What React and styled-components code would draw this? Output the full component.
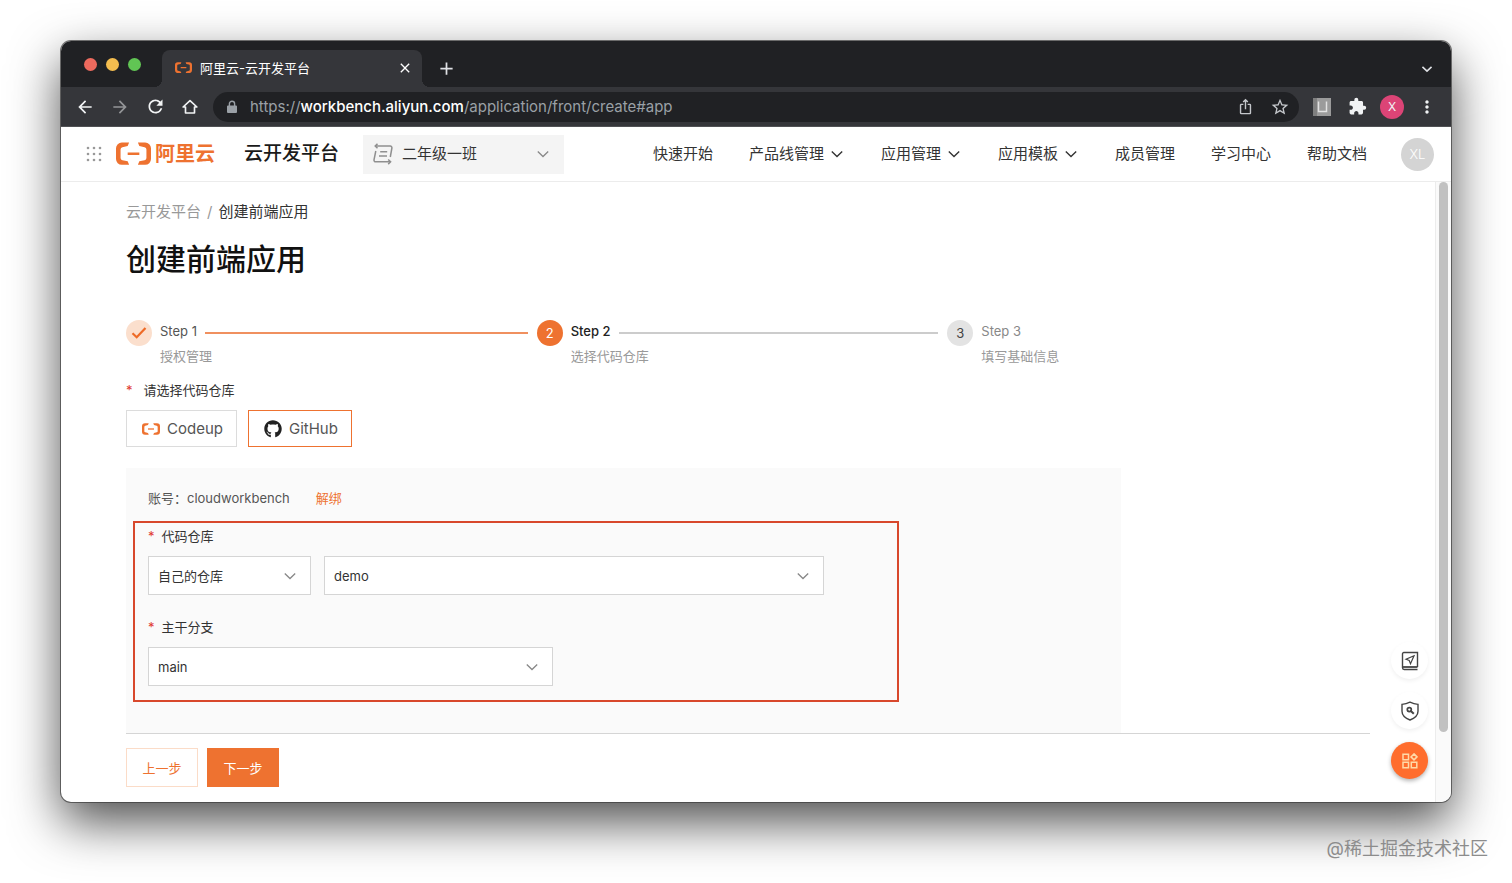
import React from 'react';
import styled, { createGlobalStyle } from 'styled-components';
import {
	MdArrowBack,
	MdArrowForward,
	MdRefresh,
	MdIosShare,
	MdStarBorder,
	MdExtension,
	MdMoreVert,
	MdClose,
	MdAdd,
} from 'react-icons/md';
import { FaGithub } from 'react-icons/fa';

const GlobalStyle = createGlobalStyle`
	:root {
		--orange: #ee7230;
		--red: #d8482c;
		--text: #333;
		--muted: #999;
	}

	* {
		box-sizing: border-box;
	}

	body {
		margin: 0;
		background: #fff;
		color: var(--text);
		font-family: Inter, 'Noto Sans CJK SC', sans-serif;
		font-size: 13px;
		line-height: 20px;
	}

	button,
	select {
		font: inherit;
		color: inherit;
		margin: 0;
		padding: 0;
		border: 0;
		background: none;
	}

	a {
		color: inherit;
		text-decoration: none;
	}

	svg {
		display: block;
		flex: none;
	}
`;

/* ---------- icons ---------- */

const AliyunMark = ({ width, color = '#ee7230' }) => (
	<svg width={width} viewBox='0 0 36 24' fill={color}>
		<path d='M13.500 .5H6A6 6 0 0 0 0 6.500v11a6 6 0 0 0 6 6h7.500l-1.500-3.600-5.400-1.200A2.400 2.400 0 0 1 4.700 16.400V7.600a2.400 2.400 0 0 1 1.900-2.300L12 4.100z' />
		<path d='M22.500 .5H30a6 6 0 0 1 6 6v11a6 6 0 0 1-6 6h-7.500l1.500-3.600 5.400-1.200a2.400 2.400 0 0 0 1.900-2.300V7.600a2.400 2.400 0 0 0-1.900-2.300L24 4.100z' />
		<path d='M12 10.700h12v2.600H12z' />
	</svg>
);

const Chevron = ({ size = 16, color = '#333', strokeWidth = 1.4 }) => (
	<svg
		width={size}
		height={size}
		viewBox='0 0 16 16'
		fill='none'
		stroke={color}
		strokeWidth={strokeWidth}
	>
		<path d='m2.800 5.500 5.200 5 5.200-5' />
	</svg>
);

const HomeIcon = () => (
	<svg width='18' height='18' viewBox='0 0 24 24' fill='none' stroke='currentColor' strokeWidth='2.2'>
		<path d='M12 3.500 2.800 12H6v8h12v-8h3.200z' strokeLinejoin='round' />
	</svg>
);

const LockIcon = () => (
	<svg width='14' height='14' viewBox='0 0 14 14'>
		<path fill='#9aa0a6' d='M3 5.500h8a1 1 0 0 1 1 1V12a1 1 0 0 1-1 1H3a1 1 0 0 1-1-1V6.500a1 1 0 0 1 1-1z' />
		<path fill='none' stroke='#9aa0a6' strokeWidth='1.400' d='M4.400 6V3.800a2.600 2.600 0 0 1 5.200 0V6' />
	</svg>
);

const GridDots = () => (
	<svg width='16' height='16' viewBox='0 0 16 16' fill='#999'>
		{[2, 8, 14].map((y) =>
			[2, 8, 14].map((x) => <circle key={`${x}-${y}`} cx={x} cy={y} r='1.300' />)
		)}
	</svg>
);

const TeamIcon = () => (
	<svg width='22' height='22' viewBox='0 0 22 22' fill='none' stroke='#8f8f8f' strokeWidth='1.500'>
		<path d='M5.500 .8 3.200 3.100l2.300 2.200' />
		<path d='M3.500 3.100h14.800a1.600 1.600 0 0 1 1.600 1.900L18.300 14' />
		<path d='M3.800 8 2 16.900a1.600 1.600 0 0 0 1.600 1.900h14.800' />
		<path d='m16.200 16.500 2.400 2.300-2.400 2.300' />
		<path d='M8.200 8.800h7M7 13h8' />
	</svg>
);

const GuideIcon = () => (
	<svg width='18' height='20' viewBox='0 0 18 20' fill='none' stroke='#444' strokeWidth='1.400'>
		<path d='M16.500 16V1.500H2.800A1.300 1.300 0 0 0 1.500 2.800v14a1.700 1.700 0 0 0 1.700 1.700h13.300' />
		<path d='M1.500 16H16.500' strokeWidth='1.800' />
		<path d='m13 4.800-8 3.400 3.200 1.300 1.300 3.200z' strokeWidth='1.200' />
	</svg>
);

const ShieldIcon = () => (
	<svg width='18' height='20' viewBox='0 0 18 20' fill='none' stroke='#444' strokeWidth='1.400'>
		<path d='M9 1.200c2.600 1.300 5.200 2 8 2.200v6.800c0 3.800-3.200 6.900-8 8.800-4.800-1.900-8-5-8-8.800V3.400c2.800-.2 5.400-.9 8-2.200z' />
		<circle cx='8.300' cy='8.600' r='2' strokeWidth='1.700' />
		<path d='m9.800 10 3 2.800' strokeWidth='2' />
	</svg>
);

const BlocksIcon = () => (
	<svg width='16' height='16' viewBox='0 0 16 16' fill='none' stroke='#ffd9a8' strokeWidth='1.500'>
		<path d='M1 1.200h5.500v5.500H1zM1 9.200h5.500v5.500H1zM9.300 9.200h5.500v5.500H9.300zM12 .9l3 3-3 3-3-3z' />
	</svg>
);

const CheckIcon = () => (
	<svg width='16' height='16' viewBox='0 0 16 16' fill='none' stroke='#ee6a26' strokeWidth='2.200'>
		<path d='m1.500 8.200 4.200 4L14.500 3' />
	</svg>
);

const UnitIcon = () => (
	<svg width='18' height='18' viewBox='0 0 18 18'>
		<path fill='#9b9b9b' d='M0 0h18v18H0z' />
		<path fill='#7f7f7f' d='M0 0h4v18H0z' />
		<path fill='none' stroke='#e2e2e2' strokeWidth='1.500' d='M5.500 3.500v10h8v-10' />
	</svg>
);

/* ---------- browser window ---------- */

const Desktop = styled.div`
	min-height: 100vh;
	padding-top: 41px;
	overflow: hidden;
`;

const Window = styled.div`
	margin: 0 61px;
	border-radius: 10px;
	overflow: hidden;
	background: #fff;
	box-shadow: 0 0 0 1px rgba(60, 60, 60, 0.7), 0 20px 50px rgba(0, 0, 0, 0.7);
`;

const TabStrip = styled.div`
	display: flex;
	align-items: flex-end;
	height: 46px;
	padding: 0 10px 0 23px;
	background: #202124;
	color: #dfe1e5;
`;

const Lights = styled.div`
	display: flex;
	align-items: center;
	gap: 9px;
	height: 46px;
	margin-right: 21px;
`;

const Light = styled.button`
	width: 13px;
	height: 13px;
	border-radius: 50%;
	background: ${({ $color }) => $color};
`;

const Tab = styled.div`
	position: relative;
	display: flex;
	align-items: center;
	width: 260px;
	height: 37px;
	padding: 0 9px 2px 13px;
	gap: 8px;
	border-radius: 8px 8px 0 0;
	background: #35363a;
	color: #fff;

	&::before,
	&::after {
		content: '';
		position: absolute;
		bottom: 0;
		width: 8px;
		height: 8px;
	}

	&::before {
		right: 100%;
		background: radial-gradient(circle at 0 0, transparent 8px, #35363a 8px);
	}

	&::after {
		left: 100%;
		background: radial-gradient(circle at 100% 0, transparent 8px, #35363a 8px);
	}
`;

const TabTitle = styled.span`
	flex: 1;
`;

const StripButton = styled.button`
	display: grid;
	place-items: center;
	height: 37px;
	width: ${({ $width }) => $width}px;
`;

const Spacer = styled.div`
	flex: 1;
`;

const Toolbar = styled.div`
	display: flex;
	align-items: center;
	gap: 7px;
	height: 40px;
	padding: 0 10px;
	border-bottom: 1px solid #505154;
	background: #35363a;
	color: #f1f3f4;
`;

const ToolButton = styled.button`
	display: grid;
	place-items: center;
	width: 28px;
	height: 28px;
	opacity: ${({ disabled }) => (disabled ? 0.5 : 1)};
`;

const AddressBar = styled.div`
	flex: 1;
	display: flex;
	align-items: center;
	height: 30px;
	margin: 0 2px;
	padding: 0 5px 0 12px;
	border-radius: 15px;
	background: #202124;
	color: #9aa0a6;
	gap: 7px;
`;

const Address = styled.span`
	flex: 1;
	padding-left: 4px;
	font-family: Inter, sans-serif;
	font-size: 15px;

	b {
		font-weight: 500;
		color: #fff;
	}
`;

const Profile = styled.span`
	display: grid;
	place-items: center;
	width: 24px;
	height: 24px;
	border-radius: 50%;
	background: #dc4476;
	font-size: 12px;
`;

/* ---------- site header ---------- */

const Header = styled.header`
	display: flex;
	align-items: center;
	height: 55px;
	padding: 0 17px 0 25px;
	border-bottom: 1px solid #ececec;
	font-size: 15px;
`;

const Brand = styled.a`
	display: flex;
	align-items: center;
	gap: 4px;
	margin-left: 14px;
	color: var(--orange);
	font-size: 20px;
	font-weight: 600;
`;

const Product = styled.strong`
	margin: 0 24px 0 29px;
	font-size: 19px;
	font-weight: 500;
	color: #1a1a1a;
`;

const SelectBox = styled.div`
	display: grid;
	grid-template-columns: 1fr 40px;
	align-items: center;
	width: ${({ $width }) => $width}px;
	height: 39px;
	border: 1px solid ${({ $plain }) => ($plain ? '#f4f4f4' : '#d5d5d5')};
	background: ${({ $plain }) => ($plain ? '#f4f4f4' : '#fff')};

	select {
		grid-area: 1 / 1 / 2 / 3;
		width: 100%;
		height: 37px;
		padding-left: ${({ $plain }) => ($plain ? 38 : 9)}px;
		appearance: none;
		outline: none;
	}

	svg {
		pointer-events: none;
	}
`;

const SelectLead = styled.span`
	grid-area: 1 / 1;
	padding-left: 8px;
`;

const SelectArrow = styled.span`
	grid-area: 1 / 2;
	justify-self: center;
`;

const Nav = styled.nav`
	display: flex;
	align-items: center;
	gap: 36px;
	margin-left: auto;
	margin-right: 34px;

	a {
		display: flex;
		align-items: center;
		gap: 5px;
		white-space: nowrap;
	}
`;

const Avatar = styled.span`
	display: grid;
	place-items: center;
	width: 33px;
	height: 33px;
	border-radius: 50%;
	background: #d4d4d4;
	color: #fff;
	font-size: 13px;
	font-weight: 300;
`;

/* ---------- page ---------- */

const Viewport = styled.div`
	position: relative;
	display: flex;
`;

const Main = styled.main`
	flex: 1;
	padding: 20px 65px 15px;
`;

const Scrollbar = styled.div`
	width: 16px;
	padding-left: 3px;
	border-left: 1px solid #ececec;
	background: #fafafa;

	&::before {
		content: '';
		display: block;
		width: 9px;
		height: 550px;
		border-radius: 5px;
		background: #c1c1c1;
	}
`;

const Breadcrumb = styled.nav`
	display: flex;
	gap: 6px;
	font-size: 15px;
	color: var(--muted);

	[aria-current] {
		color: var(--text);
	}
`;

const Title = styled.h1`
	margin: 17px 0 41px;
	font-size: 30px;
	line-height: 40px;
	font-weight: 500;
	color: #111;
`;

const Steps = styled.ol`
	display: grid;
	grid-template-columns: repeat(3, 1fr);
	margin: 0;
	padding: 0 12px 0 0;
	list-style: none;
`;

const StepItem = styled.li`
	display: flex;
	gap: 8px;
`;

const stepColors = {
	done: { badge: '#fbdfcd', mark: '#ee6a26', title: '#555', line: '#f0905f' },
	current: { badge: '#ee7230', mark: '#fff', title: '#222', line: '#ccc' },
	todo: { badge: '#e3e3e3', mark: '#444', title: '#888', line: 'transparent' },
};

const StepBadge = styled.span`
	display: grid;
	place-items: center;
	width: 26px;
	height: 26px;
	border-radius: 50%;
	background: ${({ $state }) => stepColors[$state].badge};
	color: ${({ $state }) => stepColors[$state].mark};
`;

const StepBody = styled.div`
	flex: 1;
	color: var(--muted);
`;

const StepHead = styled.div`
	display: flex;
	align-items: center;
	gap: 8px;
	height: 26px;
	padding-right: 9px;

	span {
		padding-bottom: 4px;
		font-weight: ${({ $state }) => ($state === 'current' ? 500 : 400)};
		color: ${({ $state }) => stepColors[$state].title};
	}

	&::after {
		content: '';
		flex: 1;
		height: 2px;
		background: ${({ $state }) => stepColors[$state].line};
	}
`;

const FieldLabel = styled.label`
	display: flex;
	gap: ${({ $wide }) => ($wide ? 11 : 7)}px;

	&::before {
		content: '*';
		color: #e0392f;
	}
`;

const Providers = styled.div`
	display: flex;
	gap: 11px;
	margin: 10px 0 21px;
`;

const ProviderField = styled.div`
	margin-top: 14px;
`;

const ProviderButton = styled.button`
	display: flex;
	align-items: center;
	gap: 7px;
	height: 37px;
	padding: 0 13px 0 15px;
	border: 1px solid ${({ $active }) => ($active ? '#ee7230' : '#dcdcdc')};
	font-size: 15px;
	color: #555;
`;

const Panel = styled.section`
	width: 80%;
	padding: 20px 7px 31px;
	background: #fafafa;
`;

const Account = styled.div`
	display: flex;
	gap: 26px;
	padding-left: 15px;
	color: #555;

	a {
		color: var(--orange);
	}
`;

const Highlight = styled.div`
	max-width: 766px;
	margin-top: 13px;
	padding: 3px 13px 14px;
	border: 2px solid var(--red);
`;

const Field = styled.div`
	& + & {
		margin-top: 22px;
	}
`;

const FieldRow = styled.div`
	display: flex;
	gap: 13px;
	margin-top: 10px;
`;

const Actions = styled.div`
	display: flex;
	gap: 9px;
	padding-top: 14px;
	border-top: 1px solid #d5d5d5;
`;

const ActionButton = styled.button`
	width: 72px;
	height: 39px;
	border: 1px solid ${({ $primary }) => ($primary ? 'var(--orange)' : '#fbdcc8')};
	background: ${({ $primary }) => ($primary ? 'var(--orange)' : '#fff')};
	color: ${({ $primary }) => ($primary ? '#fff' : 'var(--orange)')};
`;

const FloatingTools = styled.div`
	position: absolute;
	right: 23px;
	bottom: 23px;
	display: flex;
	flex-direction: column;
	gap: 13px;
`;

const RoundButton = styled.button`
	display: grid;
	place-items: center;
	width: 37px;
	height: 37px;
	border-radius: 50%;
	background: ${({ $accent }) => ($accent ? '#ff6d2d' : '#fff')};
	box-shadow: 0 2px 4px ${({ $accent }) => ($accent ? 'rgba(0, 0, 0, 0.3)' : 'rgba(0, 0, 0, 0.06)')};
`;

const Watermark = styled.footer`
	margin-top: 35px;
	padding-right: 24px;
	text-align: right;
	font-size: 18px;
	line-height: 24px;
	color: #8c8c8c;
`;

const navItems = [
	{ label: '快速开始' },
	{ label: '产品线管理', menu: true },
	{ label: '应用管理', menu: true },
	{ label: '应用模板', menu: true },
	{ label: '成员管理' },
	{ label: '学习中心' },
	{ label: '帮助文档' },
];

const steps = [
	{ title: 'Step 1', text: '授权管理', state: 'done' },
	{ title: 'Step 2', text: '选择代码仓库', state: 'current' },
	{ title: 'Step 3', text: '填写基础信息', state: 'todo' },
];

const Select = ({ id, label, value, width, plain, lead }) => (
	<SelectBox $width={width} $plain={plain}>
		<select id={id} aria-label={label} defaultValue={value}>
			<option>{value}</option>
		</select>
		{lead && <SelectLead>{lead}</SelectLead>}
		<SelectArrow>
			<Chevron color='#888' strokeWidth={1.3} />
		</SelectArrow>
	</SelectBox>
);

const BrowserChrome = () => (
	<>
		<TabStrip>
			<Lights>
				<Light $color='#ed6a5e' aria-label='Close window' />
				<Light $color='#f4bd4f' aria-label='Minimize' />
				<Light $color='#61c554' aria-label='Zoom' />
			</Lights>
			<Tab>
				<AliyunMark width={17} />
				<TabTitle>阿里云-云开发平台</TabTitle>
				<button aria-label='Close tab'>
					<MdClose size={16} />
				</button>
			</Tab>
			<StripButton $width={48} aria-label='New tab'>
				<MdAdd size={21} />
			</StripButton>
			<Spacer />
			<StripButton $width={28} aria-label='Search tabs'>
				<Chevron size={14} color='#dfe1e5' strokeWidth={1.8} />
			</StripButton>
		</TabStrip>
		<Toolbar>
			<ToolButton aria-label='Back'>
				<MdArrowBack size={20} />
			</ToolButton>
			<ToolButton aria-label='Forward' disabled>
				<MdArrowForward size={20} />
			</ToolButton>
			<ToolButton aria-label='Reload'>
				<MdRefresh size={21} />
			</ToolButton>
			<ToolButton aria-label='Home'>
				<HomeIcon />
			</ToolButton>
			<AddressBar>
				<LockIcon />
				<Address>
					https://<b>workbench.aliyun.com</b>/application/front/create#app
				</Address>
				<ToolButton aria-label='Share'>
					<MdIosShare size={17} color='#c4c7cb' />
				</ToolButton>
				<ToolButton aria-label='Bookmark'>
					<MdStarBorder size={20} color='#c4c7cb' />
				</ToolButton>
			</AddressBar>
			<ToolButton aria-label='Extension'>
				<UnitIcon />
			</ToolButton>
			<ToolButton aria-label='Extensions'>
				<MdExtension size={19} />
			</ToolButton>
			<ToolButton aria-label='Profile'>
				<Profile>X</Profile>
			</ToolButton>
			<ToolButton aria-label='Menu'>
				<MdMoreVert size={20} />
			</ToolButton>
		</Toolbar>
	</>
);

const SiteHeader = () => (
	<Header>
		<button aria-label='Products'>
			<GridDots />
		</button>
		<Brand href='#'>
			<AliyunMark width={35} />
			阿里云
		</Brand>
		<Product>云开发平台</Product>
		<Select label='团队' value='二年级一班' width={201} plain lead={<TeamIcon />} />
		<Nav>
			{navItems.map(({ label, menu }) => (
				<a key={label} href='#'>
					{label}
					{menu && <Chevron />}
				</a>
			))}
		</Nav>
		<Avatar>XL</Avatar>
	</Header>
);

const App = () => {
	return (
		<Desktop>
			<GlobalStyle />
			<Window>
				<BrowserChrome />
				<SiteHeader />
				<Viewport>
					<Main>
						<Breadcrumb>
							<a href='#'>云开发平台</a>
							<span>/</span>
							<span aria-current='page'>创建前端应用</span>
						</Breadcrumb>
						<Title>创建前端应用</Title>
						<Steps>
							{steps.map(({ title, text, state }, i) => (
								<StepItem key={title}>
									<StepBadge $state={state}>
										{state === 'done' ? <CheckIcon /> : i + 1}
									</StepBadge>
									<StepBody>
										<StepHead $state={state}>
											<span>{title}</span>
										</StepHead>
										{text}
									</StepBody>
								</StepItem>
							))}
						</Steps>

						<ProviderField>
							<FieldLabel as='div' $wide>
								请选择代码仓库
							</FieldLabel>
							<Providers>
								<ProviderButton>
									<AliyunMark width={18} />
									Codeup
								</ProviderButton>
								<ProviderButton $active>
									<FaGithub size={18} color='#222' />
									GitHub
								</ProviderButton>
							</Providers>
						</ProviderField>

						<Panel>
							<Account>
								<span>账号：cloudworkbench</span>
								<a href='#'>解绑</a>
							</Account>
							<Highlight>
								<Field>
									<FieldLabel htmlFor='repo'>代码仓库</FieldLabel>
									<FieldRow>
										<Select label='仓库类型' value='自己的仓库' width={163} />
										<Select id='repo' value='demo' width={500} />
									</FieldRow>
								</Field>
								<Field>
									<FieldLabel htmlFor='branch'>主干分支</FieldLabel>
									<FieldRow>
										<Select id='branch' value='main' width={405} />
									</FieldRow>
								</Field>
							</Highlight>
						</Panel>

						<Actions>
							<ActionButton>上一步</ActionButton>
							<ActionButton $primary>下一步</ActionButton>
						</Actions>
					</Main>
					<Scrollbar />
					<FloatingTools>
						<RoundButton aria-label='使用指南'>
							<GuideIcon />
						</RoundButton>
						<RoundButton aria-label='安全检测'>
							<ShieldIcon />
						</RoundButton>
						<RoundButton $accent aria-label='更多工具'>
							<BlocksIcon />
						</RoundButton>
					</FloatingTools>
				</Viewport>
			</Window>
			<Watermark>@稀土掘金技术社区</Watermark>
		</Desktop>
	);
};

export default App;
